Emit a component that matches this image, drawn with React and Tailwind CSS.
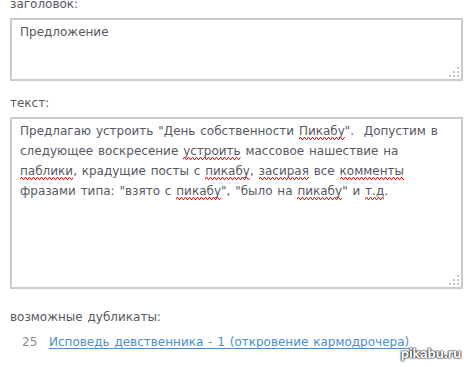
import React from 'react';

// красная волнистая линия орфографии
const Typo = ({ children }) => (
    <span className="relative inline-block">
        {children}
        <svg className="absolute left-0 bottom-[1px] w-full h-[3px] overflow-hidden" preserveAspectRatio="none">
            <defs>
                <pattern id="squiggle" width="4" height="3" patternUnits="userSpaceOnUse">
                    <path d="M0 2.5 L1 0.5 L2 0.5 L3 2.5 L4 2.5" stroke="#e11" strokeWidth="1" fill="none" />
                </pattern>
            </defs>
            <rect width="100%" height="3" fill="url(#squiggle)" />
        </svg>
    </span>
);

const Grip = () => (
    <svg className="absolute right-[2px] bottom-[2px]" width="11" height="11" viewBox="0 0 11 11">
        <rect x="9" y="1" width="2" height="2" fill="#c4c4c4" />
        <rect x="5" y="5" width="2" height="2" fill="#c4c4c4" />
        <rect x="9" y="5" width="2" height="2" fill="#c4c4c4" />
        <rect x="1" y="9" width="2" height="2" fill="#c4c4c4" />
        <rect x="5" y="9" width="2" height="2" fill="#c4c4c4" />
        <rect x="9" y="9" width="2" height="2" fill="#c4c4c4" />
    </svg>
);

const Box = ({ height, children }) => (
    <div
        className="relative border-2 border-[#cbcbcb] bg-white px-[8px] py-[2px] text-[#585862] leading-[20px] whitespace-nowrap"
        style={{ height }}
    >
        {children}
        <Grip />
    </div>
);

const App = () => {
    return (
        <div
            className="w-[464px] h-[367px] overflow-hidden bg-white pl-[10px] pr-[1px] text-[12px] [word-spacing:1px] relative"
            style={{ fontFamily: '"DejaVu Sans", sans-serif' }}
        >
            {/* заголовок */}
            <div className="-mt-[6px] text-[#585862] leading-[20px]">заголовок:</div>
            <div className="mt-[4px]">
                <Box height={63}>Предложение</Box>
            </div>

            {/* текст */}
            <div className="mt-[12px] text-[#585862] leading-[20px]">текст:</div>
            <div className="mt-[4px]">
                <Box height={172}>
                    <div>Предлагаю устроить "День собственности <Typo>Пикабу</Typo>".&nbsp; Допустим в</div>
                    <div>следующее воскресение <Typo>устроить</Typo> массовое нашествие на</div>
                    <div>
                        <Typo>паблики</Typo>, крадущие посты с <Typo>пикабу</Typo>, <Typo>засирая</Typo> все <Typo>комменты</Typo>
                    </div>
                    <div>
                        фразами типа: "взято с <Typo>пикабу</Typo>", "было на <Typo>пикабу</Typo>" и <Typo>т.д</Typo>.
                    </div>
                </Box>
            </div>

            {/* дубликаты */}
            <div className="mt-[18px] text-[#585862] leading-[20px]">возможные дубликаты:</div>
            <div className="mt-[5px] flex items-center leading-[20px]">
                <span className="w-[39px] pl-[12px] text-[#8a8a8a]">25</span>
                <a href="#" className="text-[#4a8fd0] underline underline-offset-[2px]">
                    Исповедь девственника - 1 (откровение кармодрочера)
                </a>
            </div>

            <div
                className="absolute right-[3px] bottom-[4px] text-[12px] text-white font-bold tracking-[-0.5px] [word-spacing:0]"
                style={{ textShadow: '0 0 2px #000, 0 0 1px #000, 0 0 1px #000' }}
            >
                pikabu.ru
            </div>
        </div>
    );
};

export default App;
